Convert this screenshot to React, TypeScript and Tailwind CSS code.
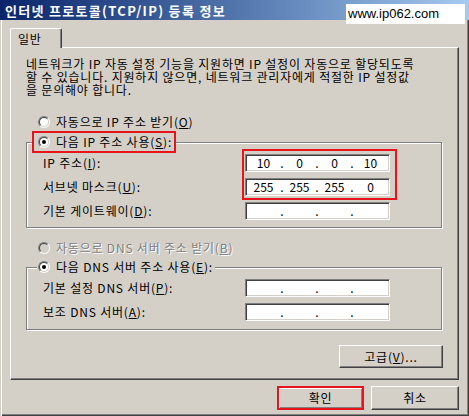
import React from 'react';

// Windows classic "TCP/IP properties" dialog

const FONT = "font-['Noto_Sans_CJK_KR','Liberation_Sans',sans-serif]";

function Radio({ checked, disabled }: { checked?: boolean; disabled?: boolean }) {
  return (
    <span className="inline-block w-[12px] h-[12px] shrink-0 rounded-full border border-t-[#808080] border-l-[#808080] border-b-white border-r-white">
      <span
        className={`flex items-center justify-center w-full h-full rounded-full border border-t-[#404040] border-l-[#404040] border-b-[#d4d0c8] border-r-[#d4d0c8] ${
          disabled ? 'bg-[#d4d0c8]' : 'bg-white'
        }`}
      >
        {checked && <span className="w-[4px] h-[4px] rounded-full bg-black" />}
      </span>
    </span>
  );
}

function Key({ k }: { k: string }) {
  return <u className="underline underline-offset-[1px]">{k}</u>;
}

function IpField({ values }: { values?: string[] }) {
  const v = values ?? ['', '', '', ''];
  const dot = <span className="w-[4px] text-center tracking-normal">.</span>;
  return (
    <div className="flex items-center w-[145px] h-[18px] bg-white border border-t-[#808080] border-l-[#808080] border-b-white border-r-white shadow-[inset_1px_1px_0_#404040,inset_-1px_-1px_0_#d4d0c8] pl-[1px] text-[12px] leading-[16px] tracking-normal">
      <span className="w-[33px] text-center">{v[0]}</span>
      {dot}
      <span className="w-[31px] text-center">{v[1]}</span>
      {dot}
      <span className="w-[31px] text-center">{v[2]}</span>
      {dot}
      <span className="w-[33px] text-center">{v[3]}</span>
    </div>
  );
}

function FieldRow({ label, values }: { label: React.ReactNode; values?: string[] }) {
  return (
    <div className="flex items-center h-[18px] pl-[16px]">
      <span className="w-[202px]">{label}</span>
      <IpField values={values} />
    </div>
  );
}

function Button({ children, className = '' }: { children: React.ReactNode; className?: string }) {
  return (
    <div
      className={`flex items-center justify-center bg-[#d4d0c8] border border-t-white border-l-white border-b-[#404040] border-r-[#404040] shadow-[inset_-1px_-1px_0_#808080] ${className}`}
    >
      {children}
    </div>
  );
}

export default function App() {
  return (
    <div
      className={`relative w-[469px] h-[416px] overflow-hidden bg-[#d4d0c8] text-black text-[12px] tracking-[0.8px] ${FONT} shadow-[inset_1px_0_0_#d4d0c8,inset_2px_0_0_#fff,inset_-1px_-1px_0_#404040,inset_-2px_-2px_0_#808080]`}
    >
      {/* title bar */}
      <div className="h-[20px] pl-[5px] flex items-center bg-gradient-to-r from-[#0a246a] to-[#a6caf0] text-white font-bold text-[13px] tracking-[1.3px] leading-none">
        인터넷 프로토콜(TCP/IP) 등록 정보
      </div>

      {/* watermark */}
      <div className="absolute top-[4px] left-[346px] w-[119px] h-[20px] bg-white pl-[2px] flex items-center font-['Liberation_Sans',sans-serif] text-[13px] tracking-normal text-black">
        www.ip062.com
      </div>

      {/* tab */}
      <div className="pl-[10px] pt-[8px]">
        <div className="relative z-10 -mb-[1px] w-[52px] h-[20px] bg-[#d4d0c8] border-l border-t border-r border-l-white border-t-white border-r-[#404040] rounded-t-[2px] shadow-[inset_-1px_0_0_#808080] pl-[7px] flex items-center">
          일반
        </div>
      </div>

      {/* panel */}
      <div className="ml-[10px] w-[449px] h-[333px] border border-l-white border-t-white border-r-[#404040] border-b-[#404040] shadow-[inset_-1px_-1px_0_#808080] pl-[15px] flex flex-col">
        <p className="mt-[9px] h-[39px] leading-[13px]">
          네트워크가 IP 자동 설정 기능을 지원하면 IP 설정이 자동으로 할당되도록
          <br />
          할 수 있습니다. 지원하지 않으면, 네트워크 관리자에게 적절한 IP 설정값
          <br />
          을 문의해야 합니다.
        </p>

        <div className="mt-[18px] h-[16px] pl-[12px] flex items-center gap-[6px]">
          <Radio />
          <span>
            자동으로 IP 주소 받기(<Key k="O" />)
          </span>
        </div>

        <fieldset className="mt-[1px] w-[416px] border border-[#808080] shadow-[1px_1px_0_#fff,inset_1px_1px_0_#fff] pt-[1px] pb-[7px]">
          <legend className="ml-[5px] bg-[#d4d0c8]">
            <div className="w-[144px] h-[22px] border-2 border-[#e8141b] pl-[4px] flex items-center gap-[6px]">
              <Radio checked />
              <span className="whitespace-nowrap">
                다음 IP 주소 사용(<Key k="S" />):
              </span>
            </div>
          </legend>
          <div className="flex flex-col gap-[6px]">
            <FieldRow
              label={
                <>
                  IP 주소(<Key k="I" />):
                </>
              }
              values={['10', '0', '0', '10']}
            />
            <FieldRow
              label={
                <>
                  서브넷 마스크(<Key k="U" />):
                </>
              }
              values={['255', '255', '255', '0']}
            />
            <FieldRow
              label={
                <>
                  기본 게이트웨이(<Key k="D" />):
                </>
              }
            />
          </div>
        </fieldset>

        <div className="mt-[12px] h-[16px] pl-[12px] flex items-center gap-[6px] text-[#808080] [text-shadow:1px_1px_0_#fff]">
          <Radio disabled />
          <span>
            자동으로 DNS 서버 주소 받기(<Key k="B" />)
          </span>
        </div>

        <fieldset className="mt-[3px] w-[416px] border border-[#808080] shadow-[1px_1px_0_#fff,inset_1px_1px_0_#fff] pt-[4px] pb-[8px]">
          <legend className="ml-[10px] bg-[#d4d0c8]">
            <div className="h-[16px] pl-[1px] pr-[2px] flex items-center gap-[6px]">
              <Radio checked />
              <span>
                다음 DNS 서버 주소 사용(<Key k="E" />):
              </span>
            </div>
          </legend>
          <div className="flex flex-col gap-[6px]">
            <FieldRow
              label={
                <>
                  기본 설정 DNS 서버(<Key k="P" />):
                </>
              }
            />
            <FieldRow
              label={
                <>
                  보조 DNS 서버(<Key k="A" />):
                </>
              }
            />
          </div>
        </fieldset>

        <div className="mt-[15px] w-[417px] flex justify-end">
          <Button className="w-[104px] h-[23px]">
            고급(<Key k="V" />)...
          </Button>
        </div>
      </div>

      {/* bottom buttons */}
      <div className="mt-[6px] pr-[10px] flex justify-end gap-[7px]">
        <div className="w-[87px] h-[24px] border-2 border-[#e8141b] bg-[#d4d0c8] shadow-[inset_1px_1px_0_#fff,inset_-1px_-1px_0_#808080] flex items-center justify-center">
          확인
        </div>
        <Button className="w-[88px] h-[24px]">취소</Button>
      </div>

      {/* red highlight drawn over the address fields */}
      <div className="absolute top-[149px] left-[242px] w-[155px] h-[51px] border-2 border-[#e8141b] pointer-events-none" />
    </div>
  );
}
